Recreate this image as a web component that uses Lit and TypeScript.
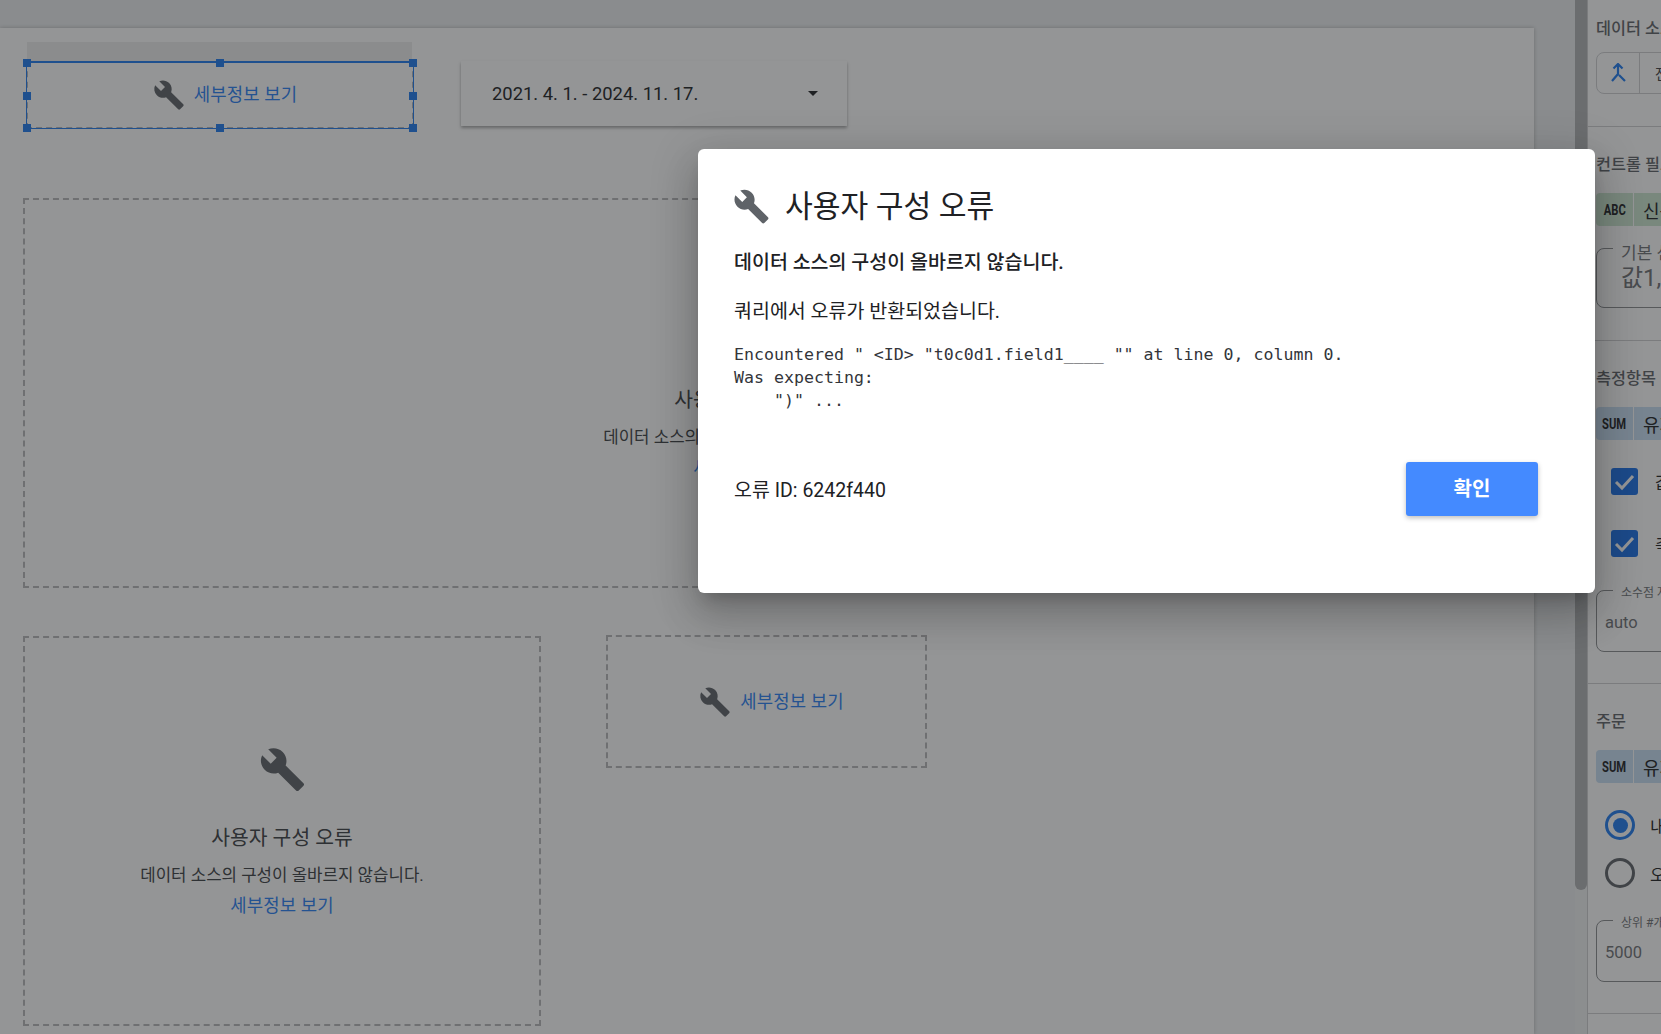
import { LitElement, css, html, svg } from "lit";
import { customElement } from "lit/decorators.js";

const wrench = (cls: string) => html`<svg class=${cls} viewBox="0 0 24 24">
  ${svg`<path d="M22.7 19l-9.1-9.1c.9-2.3.4-5-1.5-6.9-2-2-5-2.4-7.4-1.3L9 6 6 9 1.6 4.7C.4 7.1.9 10.1 2.9 12.1c1.9 1.9 4.6 2.4 6.9 1.5l9.1 9.1c.4.4 1 .4 1.4 0l2.3-2.3c.5-.4.5-1.1.1-1.4z" />`}
</svg>`;

const KO_LINK = "세부정보 보기";
const TITLE = "사용자 구성 오류";
const MESSAGE = "데이터 소스의 구성이 올바르지 않습니다.";

@customElement("app-root")
export class AppRoot extends LitElement {
  static styles = css`
    :host {
      display: block;
      position: relative;
      width: 1661px;
      height: 1034px;
      overflow: hidden;
      background: #ecedef;
      font-family: "Roboto", "Noto Sans CJK KR", sans-serif;
      color: #202124;
    }

    .shell {
      display: flex;
      height: 100%;
    }

    .scroller {
      width: 1575px;
      padding-top: 28px;
      box-sizing: border-box;
      background: #eceef0;
    }

    .page {
      position: relative;
      width: 1534px;
      height: 1006px;
      background: #fff;
      box-shadow: 0 0 4px rgba(0, 0, 0, 0.25);
    }

    .scrollbar {
      width: 12px;
      background: #f0f1f2;
    }

    .thumb {
      height: 890px;
      background: #b1b2b4;
      border-radius: 0 0 6px 6px;
    }

    /* widgets on the report canvas */
    .widget {
      position: absolute;
      box-sizing: border-box;
      display: flex;
      align-items: center;
      justify-content: center;
    }

    .dashed {
      border: 2px dashed #b8b9bb;
    }

    .stack {
      flex-direction: column;
      padding-top: 2px;
    }

    .inline {
      gap: 9px;
      padding-left: 10px;
    }

    .link {
      color: #2a80f5;
      font-size: 17.8px;
      line-height: 24px;
      letter-spacing: 0.1px;
    }

    .w-title {
      font-size: 20.4px;
      line-height: 28px;
      color: #3c4043;
      margin-top: 31px;
    }

    .w-msg {
      font-size: 16.8px;
      line-height: 24px;
      color: #3c4043;
      margin-top: 11px;
    }

    .stack .link {
      margin-top: 7px;
    }

    svg.icon-sm,
    svg.icon-lg,
    svg.icon-dlg {
      fill: #5f6368;
      flex: none;
    }

    svg.icon-sm {
      width: 32px;
      height: 32px;
    }

    svg.icon-lg {
      width: 47px;
      height: 47px;
    }

    svg.icon-dlg {
      width: 37px;
      height: 37px;
      margin-left: -1px;
    }

    .header-stub {
      position: absolute;
      left: 27px;
      top: 14px;
      width: 385px;
      height: 19px;
      background: #eeeeee;
    }

    .selection {
      position: absolute;
      inset: -2px;
      border: 1.5px solid #1f7bf0;
      border-top-width: 2px;
    }

    .handle {
      position: absolute;
      width: 8px;
      height: 8px;
      background: #1f7bf0;
      transform: translate(-50%, -50%);
    }

    .date {
      left: 461px;
      top: 33px;
      width: 386px;
      height: 65px;
      justify-content: space-between;
      padding: 0 29px 0 31px;
      font-size: 18.4px;
      box-shadow: 0 2px 3px rgba(0, 0, 0, 0.35);
      background: #fff;
    }

    .caret {
      width: 0;
      height: 0;
      border-left: 5px solid transparent;
      border-right: 5px solid transparent;
      border-top: 5px solid #202124;
    }

    /* property panel */
    .panel {
      width: 74px;
      flex: none;
      box-sizing: border-box;
      overflow: hidden;
      background: #fff;
      border-left: 1px solid #cfd0d2;
    }

    .section {
      padding: 26px 0 31px 8px;
      width: 240px;
      box-sizing: border-box;
      border-bottom: 1px solid #cfd0d2;
    }

    .section.first {
      padding-top: 17px;
      padding-bottom: 32px;
    }

    .section.control {
      padding-bottom: 32px;
    }

    .section-title {
      font-size: 16.3px;
      line-height: 24px;
      font-weight: 500;
      color: #5f6368;
      margin-bottom: 16px;
      white-space: nowrap;
    }

    .section.first .section-title {
      margin-bottom: 11px;
    }

    .source {
      display: flex;
      align-items: center;
      height: 42px;
      box-sizing: border-box;
      border: 1px solid #cfd0d2;
      border-radius: 8px;
    }

    .source-icon {
      display: flex;
      align-items: center;
      justify-content: center;
      width: 42px;
      height: 100%;
      border-right: 1px solid #cfd0d2;
    }

    .source-icon svg {
      width: 18px;
      height: 20px;
      fill: none;
      stroke: #1f7bf0;
      stroke-width: 2.2;
    }

    .source-name {
      padding-left: 15px;
      font-size: 14px;
      color: #3c4043;
      white-space: nowrap;
    }

    .chip {
      display: flex;
      align-items: center;
      height: 33px;
      border-radius: 4px 0 0 4px;
      white-space: nowrap;
      color: #202124;
      font-size: 18px;
    }

    .chip.metric {
      background: #c8def3;
    }

    .chip.dim {
      background: #cbe6cf;
    }

    .chip-type {
      width: 37px;
      height: 100%;
      flex: none;
      display: flex;
      align-items: center;
      justify-content: center;
      border-right: 1px solid #fff;
      font-size: 14px;
      font-weight: 700;
    }

    .chip-type span {
      display: inline-block;
      transform: scaleX(0.8);
    }

    .chip-name {
      padding-left: 9px;
    }

    .field {
      position: relative;
      box-sizing: border-box;
      height: 62px;
      margin-top: 33px;
      padding-left: 8px;
      border: 1px solid #8a8c8f;
      border-radius: 8px;
      color: #6f7276;
      font-size: 16.5px;
      line-height: 64px;
      white-space: nowrap;
    }

    .field-label {
      position: absolute;
      left: 16px;
      top: -6px;
      padding: 0 8px;
      background: #fff;
      font-size: 12px;
      line-height: 16px;
      color: #6f7276;
    }

    .field.big {
      height: 60px;
      margin-top: 22px;
      padding-left: 24px;
      font-size: 24px;
      line-height: 58px;
    }

    .field.big .field-label {
      font-size: 17px;
      top: -7px;
      line-height: 22px;
    }

    .checks {
      display: flex;
      flex-direction: column;
      gap: 35px;
      margin-top: 28px;
      padding-left: 15px;
    }

    .check-row,
    .radio-row {
      display: flex;
      align-items: center;
      white-space: nowrap;
      font-size: 17px;
    }

    .check-row {
      gap: 17px;
      height: 27px;
    }

    .check {
      width: 27px;
      height: 27px;
      flex: none;
      border-radius: 3px;
      background: #1a70e8;
    }

    .check svg {
      display: block;
      width: 27px;
      height: 27px;
      fill: none;
      stroke: #fff;
      stroke-width: 3;
    }

    .radios {
      display: flex;
      flex-direction: column;
      gap: 18px;
      margin-top: 27px;
      padding-left: 9px;
    }

    .radio-row {
      gap: 15px;
      height: 30px;
    }

    .radio {
      width: 30px;
      height: 30px;
      flex: none;
      box-sizing: border-box;
      border: 3.5px solid #5f6368;
      border-radius: 50%;
      display: flex;
      align-items: center;
      justify-content: center;
    }

    .radio.on {
      border-color: #1f7bf0;
    }

    .radio.on::after {
      content: "";
      width: 15px;
      height: 15px;
      border-radius: 50%;
      background: #1f7bf0;
    }

    .radios + .field {
      margin-top: 32px;
    }

    /* modal */
    .scrim {
      position: absolute;
      inset: 0;
      padding: 149px 0 0 698px;
      background: rgba(32, 33, 36, 0.48);
    }

    .dialog {
      box-sizing: border-box;
      width: 897px;
      height: 444px;
      padding: 39px 57px 0 36px;
      background: #fff;
      border-radius: 6px;
      box-shadow: 0 11px 15px -7px rgba(0, 0, 0, 0.2),
        0 24px 38px 3px rgba(0, 0, 0, 0.14),
        0 9px 46px 8px rgba(0, 0, 0, 0.12);
    }

    .dialog-head {
      display: flex;
      align-items: center;
      gap: 15px;
      height: 37px;
    }

    .dialog-title {
      font-size: 30.2px;
      line-height: 37px;
      color: #202124;
    }

    .dialog-msg {
      margin-top: 24px;
      font-size: 19.5px;
      line-height: 28px;
      font-weight: 500;
    }

    .dialog-reason {
      margin-top: 21px;
      font-size: 19.5px;
      line-height: 28px;
    }

    .dialog-trace {
      margin: 17px 0 0;
      font-family: "DejaVu Sans Mono", monospace;
      font-size: 16.6px;
      line-height: 23px;
      color: #33353a;
    }

    .dialog-foot {
      display: flex;
      align-items: center;
      justify-content: space-between;
      margin-top: 50px;
    }

    .error-id {
      margin-top: 4px;
      font-size: 19.5px;
      line-height: 28px;
    }

    .ok {
      width: 132px;
      height: 54px;
      padding: 0 0 4px;
      border: 0;
      border-radius: 3px;
      background: #448aff;
      color: #fff;
      font: 700 20px "Roboto", "Noto Sans CJK KR", sans-serif;
      box-shadow: 0 2px 5px rgba(0, 0, 0, 0.26);
    }
  `;

  private selectionHandles() {
    const spots = [
      [0, 0], [50, 0], [100, 0],
      [0, 50], [100, 50],
      [0, 100], [50, 100], [100, 100],
    ];
    return spots.map(
      ([x, y]) =>
        html`<span class="handle" style="left:${x}%;top:${y}%"></span>`
    );
  }

  private errorBox(box: string) {
    return html`<div class="widget dashed stack" style=${box}>
      ${wrench("icon-lg")}
      <div class="w-title">${TITLE}</div>
      <div class="w-msg">${MESSAGE}</div>
      <div class="link">${KO_LINK}</div>
    </div>`;
  }

  render() {
    return html`
      <div class="shell">
        <div class="scroller">
          <div class="page">
            <div class="header-stub"></div>
            <div
              class="widget dashed inline"
              style="left:26px;top:33px;width:388px;height:68px"
            >
              ${wrench("icon-sm")}
              <span class="link">${KO_LINK}</span>
              <div class="selection">${this.selectionHandles()}</div>
            </div>
            <div class="widget date">
              <span>2021. 4. 1. - 2024. 11. 17.</span>
              <span class="caret"></span>
            </div>
            ${this.errorBox("left:23px;top:170px;width:1444px;height:390px")}
            ${this.errorBox("left:23px;top:608px;width:518px;height:390px")}
            <div
              class="widget dashed inline"
              style="left:606px;top:607px;width:321px;height:133px"
            >
              ${wrench("icon-sm")}
              <span class="link">${KO_LINK}</span>
            </div>
          </div>
        </div>
        <div class="scrollbar"><div class="thumb"></div></div>
        <aside class="panel">
          <section class="section first">
            <div class="section-title">데이터 소스</div>
            <div class="source">
              <span class="source-icon">
                <svg viewBox="0 0 18 20">
                  <path d="M4.5 5.5 9 1l4.500 4.500M9 1v10L3 18M10 12l6 6" />
                </svg>
              </span>
              <span class="source-name">전자상거래</span>
            </div>
          </section>
          <section class="section control">
            <div class="section-title">컨트롤 필드</div>
            <div class="chip dim">
              <span class="chip-type"><span>ABC</span></span>
              <span class="chip-name">신규 필드</span>
            </div>
            <div class="field big">
              <span class="field-label">기본 선택</span>
              값1, 값2
            </div>
          </section>
          <section class="section">
            <div class="section-title">측정항목</div>
            <div class="chip metric">
              <span class="chip-type"><span>SUM</span></span>
              <span class="chip-name">유저</span>
            </div>
            <div class="checks">
              <div class="check-row">
                <span class="check"
                  ><svg viewBox="0 0 27 27"><path d="M5 14l6 6L22 8" /></svg
                ></span>
                <span>값</span>
              </div>
              <div class="check-row">
                <span class="check"
                  ><svg viewBox="0 0 27 27"><path d="M5 14l6 6L22 8" /></svg
                ></span>
                <span>측정항목</span>
              </div>
            </div>
            <div class="field">
              <span class="field-label">소수점 자리</span>
              auto
            </div>
          </section>
          <section class="section">
            <div class="section-title">주문</div>
            <div class="chip metric">
              <span class="chip-type"><span>SUM</span></span>
              <span class="chip-name">유저</span>
            </div>
            <div class="radios">
              <div class="radio-row">
                <span class="radio on"></span><span>내림차순</span>
              </div>
              <div class="radio-row">
                <span class="radio"></span><span>오름차순</span>
              </div>
            </div>
            <div class="field">
              <span class="field-label">상위 #개</span>
              5000
            </div>
          </section>
        </aside>
      </div>
      <div class="scrim">
        <div class="dialog">
          <div class="dialog-head">
            ${wrench("icon-dlg")}
            <div class="dialog-title">${TITLE}</div>
          </div>
          <div class="dialog-msg">${MESSAGE}</div>
          <div class="dialog-reason">쿼리에서 오류가 반환되었습니다.</div>
          <pre class="dialog-trace">
Encountered " &lt;ID&gt; "t0c0d1.field1____ "" at line 0, column 0.
Was expecting:
    ")" ...</pre
          >
          <div class="dialog-foot">
            <span class="error-id">오류 ID: 6242f440</span>
            <button class="ok">확인</button>
          </div>
        </div>
      </div>
    `;
  }
}

declare global {
  interface HTMLElementTagNameMap {
    "app-root": AppRoot;
  }
}
